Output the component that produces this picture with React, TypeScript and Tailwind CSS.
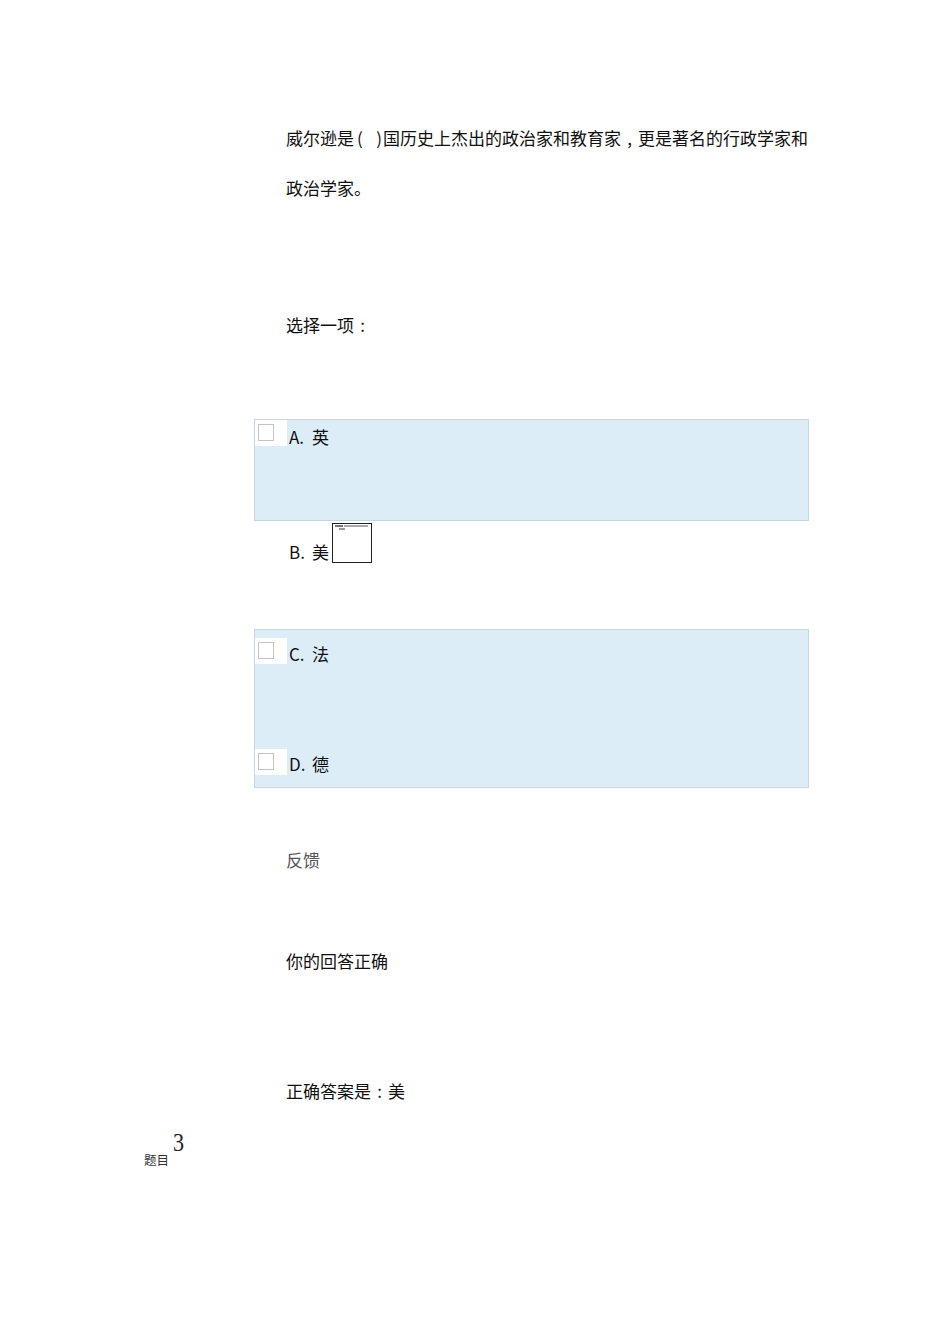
import React from 'react';

const font = { fontFamily: '"Noto Sans CJK SC", "Noto Sans", sans-serif' };

function Check() {
  return (
    <div className="w-[32px] h-[26px] bg-white shrink-0 pt-[4px] pl-[3px]">
      <div className="w-[16px] h-[17px] border border-[#c4c4c4] bg-white" />
    </div>
  );
}

function Label({ letter, text }: { letter: string; text: string }) {
  return (
    <span className="leading-[26px] whitespace-nowrap">
      <span className="inline-block w-[23px]">{letter}.</span>
      {text}
    </span>
  );
}

const Colon = () => <span className="inline-block w-[17px] text-center">:</span>;

export default function App() {
  return (
    <div className="w-[950px] h-[1344px] bg-white text-[#111] text-[17px]" style={font}>
      <div className="ml-[254px] w-[555px] pt-[113px]">
        <div className="pl-[32px] leading-[50px] whitespace-nowrap">
          <p>
            威尔逊是
            <span className="inline-flex justify-between w-[29px] pl-[3px] pr-[1px]">
              <span>(</span>
              <span>)</span>
            </span>
            国历史上杰出的政治家和教育家
            <span className="inline-block w-[17px] text-center">,</span>
            更是著名的行政学家和
          </p>
          <p>政治学家。</p>
        </div>

        <p className="pl-[32px] mt-[87px] leading-[50px]">
          选择一项<Colon />
        </p>

        <div className="mt-[69px] h-[102px] bg-[#dcedf7] border border-[#cbd6dd] flex items-start">
          <Check />
          <span className="mt-[4px] ml-[2px]">
            <Label letter="A" text="英" />
          </span>
        </div>

        <div className="h-[108px] flex items-start">
          <span className="ml-[35px] mt-[18px]">
            <Label letter="B" text="美" />
          </span>
          <div className="ml-[3px] mt-[2px] w-[40px] h-[40px] border border-[#222] bg-white px-[2px] pt-[1px]">
            <div className="flex gap-[1px]">
              <div className="w-[8px] h-[2px] bg-[#777]" />
              <div className="w-[24px] h-[2px] bg-[#aaa]" />
            </div>
            <div className="w-[6px] h-[2px] bg-[#999] mt-[1px] ml-[4px]" />
          </div>
        </div>

        <div className="h-[159px] bg-[#dcedf7] border border-[#cbd6dd] flex flex-col pt-[8px]">
          <div className="flex items-start">
            <Check />
            <span className="mt-[3px] ml-[2px]">
              <Label letter="C" text="法" />
            </span>
          </div>
          <div className="flex items-start mt-[82px]">
            <Check />
            <span className="mt-[2px] ml-[2px]">
              <Label letter="D" text="德" />
            </span>
          </div>
        </div>

        <p className="pl-[32px] mt-[47px] leading-[50px] text-[#555]">反馈</p>
        <p className="pl-[32px] mt-[51px] leading-[50px]">你的回答正确</p>
        <p className="pl-[32px] mt-[80px] leading-[50px]">
          正确答案是<Colon />美
        </p>
      </div>

      <div className="ml-[144px] mt-[12px] flex items-start">
        <span className="text-[12.5px] leading-[16px] mt-[24px] text-[#333]">题目</span>
        <span
          className="text-[26px] leading-[30px] ml-[4px] text-[#222] scale-x-[0.85] origin-left"
          style={{ fontFamily: '"Liberation Serif", serif' }}
        >
          3
        </span>
      </div>
    </div>
  );
}
